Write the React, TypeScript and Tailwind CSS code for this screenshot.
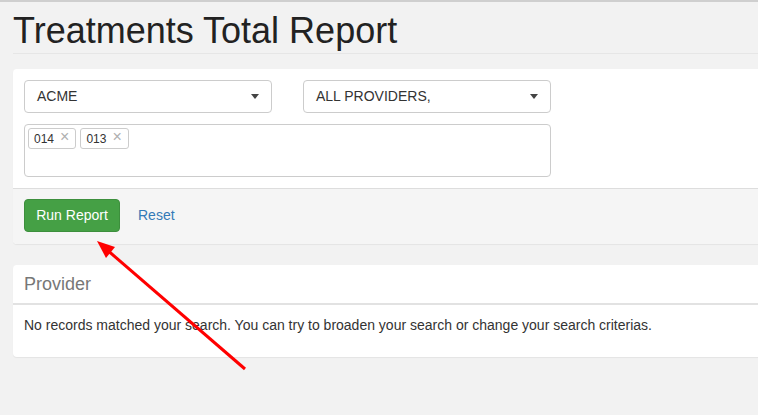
export default function App() {
  const tags = ["014", "013"];

  return (
    <div className="relative w-[758px] h-[415px] overflow-hidden bg-[#f2f2f2] border-t-2 border-[#cfcfcf] font-['Liberation_Sans',Arial,sans-serif] text-[#333]">
      <h1 className="ml-[13px] pt-[10px] pb-[3px] border-b border-[#e6e6e6] text-[36px] leading-[38px] text-[#222]">
        Treatments Total Report
      </h1>

      {/* Filters panel */}
      <div className="ml-[13px] mt-[15px] w-[790px] bg-white rounded-[4px] shadow-[0_1px_1px_rgba(0,0,0,0.06)]">
        <div className="p-[11px]">
          <div className="flex gap-[31px]">
            <div className="w-[248px] h-[33px] flex items-center justify-between px-[12px] border border-[#ccc] rounded-[4px] text-[14px]">
              <span>ACME</span>
              <span className="w-0 h-0 border-l-[4px] border-r-[4px] border-t-[5px] border-l-transparent border-r-transparent border-t-[#444]" />
            </div>
            <div className="w-[248px] h-[33px] flex items-center justify-between px-[12px] border border-[#ccc] rounded-[4px] text-[14px]">
              <span>ALL PROVIDERS,</span>
              <span className="w-0 h-0 border-l-[4px] border-r-[4px] border-t-[5px] border-l-transparent border-r-transparent border-t-[#444]" />
            </div>
          </div>
          <div className="mt-[11px] w-[527px] h-[53px] border border-[#ccc] rounded-[4px] p-[3px] flex items-start gap-[4px]">
            {tags.map((t) => (
              <div key={t} className="h-[21px] flex items-center gap-[6px] pl-[5px] pr-[6px] border border-[#ccc] rounded-[3px] text-[12px]">
                <span>{t}</span>
                <span className="text-[#b0b0b0] text-[16px] leading-none -mt-[3px]">×</span>
              </div>
            ))}
          </div>
        </div>
        <div className="bg-[#f5f5f5] border-t border-[#ddd] rounded-b-[4px] px-[11px] pt-[10px] pb-[12px] flex items-center gap-[18px]">
          <button className="w-[96px] h-[33px] rounded-[4px] bg-[#45a045] border border-[#3d8f3d] text-white text-[14px]">
            Run Report
          </button>
          <a className="text-[#337ab7] text-[14px]">Reset</a>
        </div>
      </div>

      {/* Provider panel */}
      <div className="ml-[13px] mt-[21px] w-[790px] bg-white rounded-[4px] shadow-[0_1px_1px_rgba(0,0,0,0.06)]">
        <div className="h-[40px] flex items-center px-[11px] border-b-2 border-[#e2e2e2] text-[18px] text-[#777]">
          Provider
        </div>
        <div className="h-[52px] px-[11px] pt-[10px] text-[14px] leading-[20px]">
          No records matched your search. You can try to broaden your search or change your search criterias.
        </div>
      </div>

      <svg className="absolute left-0 top-0 pointer-events-none" width="758" height="415">
        <line x1="245" y1="367" x2="106" y2="247" stroke="#ff0000" strokeWidth="3" />
        <polygon points="97,239 106,256 115,245" fill="#ff0000" />
      </svg>
    </div>
  );
}
